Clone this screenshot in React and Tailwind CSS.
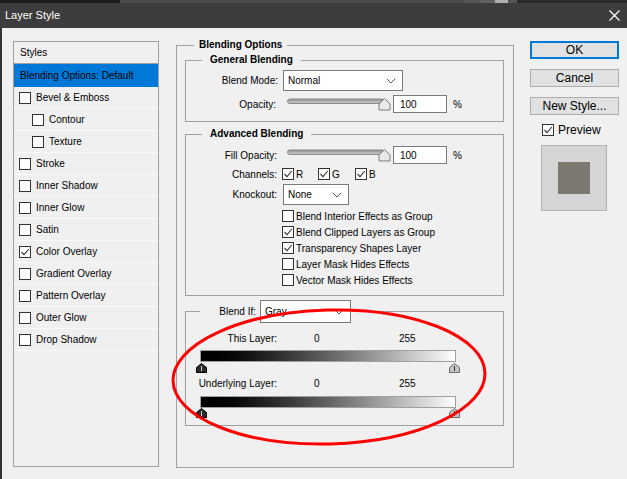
import React from "react";

const Check = ({ checked, className = "" }) => (
  <span
    className={
      "flex h-[12px] w-[12px] shrink-0 items-center justify-center border border-[#333333] bg-white " +
      className
    }
  >
    {checked && (
      <svg width="10" height="10" viewBox="0 0 10 10">
        <path d="M1.5 5 L4 7.6 L8.8 2" fill="none" stroke="#333" strokeWidth="1.1" />
      </svg>
    )}
  </span>
);

const Chevron = () => (
  <svg width="10" height="6" viewBox="0 0 10 6">
    <path d="M0.8 0.8 L5 5 L9.2 0.8" fill="none" stroke="#555" strokeWidth="1" />
  </svg>
);

const Select = ({ text, className = "" }) => (
  <div
    className={
      "flex items-center justify-between border border-[#7a7a7a] bg-white pl-[4px] pr-[6px] " + className
    }
  >
    <span>{text}</span>
    <Chevron />
  </div>
);

const Slider = () => (
  <svg width="108" height="18" viewBox="0 0 108 18" className="ml-[5px] shrink-0">
    <defs>
      <linearGradient id="trk" x1="0" y1="0" x2="0" y2="1">
        <stop offset="0" stopColor="#8e8e8e" />
        <stop offset="1" stopColor="#cfcfcf" />
      </linearGradient>
    </defs>
    <rect x="4.5" y="4" width="97" height="4.5" rx="2.2" fill="url(#trk)" stroke="#8a8a8a" strokeWidth="1" />
    <polygon points="101.5,3.5 107,9 107,15 96,15 96,9" fill="#e9e9e9" stroke="#7a7a7a" strokeWidth="1" />
  </svg>
);

const Input = ({ value }) => (
  <div className="ml-[2px] flex h-[18px] w-[54px] items-center border border-[#7a7a7a] bg-white pl-[6px]">
    {value}
  </div>
);

const Thumb = ({ dark }) => (
  <svg width="11" height="10" viewBox="0 0 11 10">
    <polygon
      points="5.5,0.5 10.5,4.5 10.5,9.5 0.5,9.5 0.5,4.5"
      fill={dark ? "#2b2b2b" : "#c4c4c4"}
      stroke={dark ? "#000" : "#6a6a6a"}
      strokeWidth="1"
    />
    <line x1="5.5" y1="3" x2="5.5" y2="8" stroke={dark ? "#d0d0d0" : "#333"} strokeWidth="1" />
  </svg>
);

const listItems = [
  { t: "Bevel & Emboss" },
  { t: "Contour", indent: true },
  { t: "Texture", indent: true },
  { t: "Stroke" },
  { t: "Inner Shadow" },
  { t: "Inner Glow" },
  { t: "Satin" },
  { t: "Color Overlay", checked: true },
  { t: "Gradient Overlay" },
  { t: "Pattern Overlay" },
  { t: "Outer Glow" },
  { t: "Drop Shadow" },
];

const advChecks = [
  { t: "Blend Interior Effects as Group" },
  { t: "Blend Clipped Layers as Group", checked: true },
  { t: "Transparency Shapes Layer", checked: true },
  { t: "Layer Mask Hides Effects" },
  { t: "Vector Mask Hides Effects" },
];

export default function App() {
  return (
    <div className="relative flex h-[479px] w-[627px] flex-col overflow-hidden bg-[#f0f0f0] font-['Liberation_Sans',Arial,sans-serif] text-[10px] text-black">
      {/* top strip */}
      <div className="flex h-[3px] shrink-0">
        <div className="w-[120px] bg-[#1c1c1c]" />
        <div className="w-[344px] bg-[#4b4b4b]" />
        <div className="w-[16px] bg-[#555555]" />
        <div className="w-[15px] bg-[#606060]" />
        <div className="w-[13px] bg-[#b0b0b0]" />
        <div className="w-[9px] bg-[#555555]" />
        <div className="flex-1 bg-[#2a2a2a]" />
      </div>
      {/* title bar */}
      <div className="flex h-[25px] shrink-0 items-center justify-between bg-[#3d3d3d] pl-[5px] pr-[7px] text-[11px] text-white">
        <span>Layer Style</span>
        <svg width="11" height="11" viewBox="0 0 11 11">
          <path d="M0.5 0.5 L10.5 10.5 M10.5 0.5 L0.5 10.5" stroke="#ffffff" strokeWidth="1.2" />
        </svg>
      </div>
      {/* body */}
      <div className="flex flex-1 border-l-2 border-[#333333]">
        {/* styles list */}
        <div className="ml-[11px] mt-[13px] flex h-[426px] w-[146px] flex-col border border-[#a0a0a0]">
          <div className="flex h-[22px] shrink-0 items-center border-b border-[#a0a0a0] pl-[6px]">Styles</div>
          <div className="flex h-[23px] shrink-0 items-center bg-[#0078d7] pl-[6px]">Blending Options: Default</div>
          {listItems.map((it) => (
            <div
              key={it.t}
              className={
                "flex h-[22px] shrink-0 items-center gap-[5px] border-b border-[#fafafa] " +
                (it.indent ? "pl-[18px]" : "pl-[5px]")
              }
            >
              <Check checked={it.checked} className="bg-[#f4f4f4]" />
              <span>{it.t}</span>
            </div>
          ))}
        </div>

        {/* main options */}
        <div className="ml-[17px] mt-[11px]">
          <fieldset className="h-[429px] w-[338px] border border-[#a0a0a0] pl-[8px] pr-[9px]">
            <legend className="ml-[9px] px-[5px] font-bold leading-[12px]">Blending Options</legend>

            {/* General Blending */}
            <fieldset className="mt-[3px] border border-[#a0a0a0] pb-[8px]">
              <legend className="ml-[16px] px-[8px] font-bold leading-[12px]">General Blending</legend>
              <div className="mt-[4px] flex h-[21px] items-center">
                <span className="w-[92px] text-right">Blend Mode:</span>
                <Select text="Normal" className="ml-[5px] h-[21px] w-[120px]" />
              </div>
              <div className="mt-[4px] flex h-[18px] items-center">
                <span className="w-[90px] text-right">Opacity:</span>
                <span className="w-[2px]" />
                <Slider />
                <Input value="100" />
                <span className="ml-[6px]">%</span>
              </div>
            </fieldset>

            {/* Advanced Blending */}
            <fieldset className="mt-[6px] border border-[#a0a0a0] pb-[7px]">
              <legend className="ml-[16px] px-[8px] font-bold leading-[12px]">Advanced Blending</legend>
              <div className="mt-[6px] flex h-[18px] items-center">
                <span className="w-[91px] text-right">Fill Opacity:</span>
                <span className="w-[1px]" />
                <Slider />
                <Input value="100" />
                <span className="ml-[6px]">%</span>
              </div>
              <div className="mt-[3px] flex h-[14px] items-center">
                <span className="w-[91px] text-right">Channels:</span>
                <div className="ml-[5px] flex w-[36px] items-center gap-[2px]">
                  <Check checked />
                  <span>R</span>
                </div>
                <div className="flex w-[37px] items-center gap-[2px]">
                  <Check checked />
                  <span>G</span>
                </div>
                <div className="flex items-center gap-[2px]">
                  <Check checked />
                  <span>B</span>
                </div>
              </div>
              <div className="mt-[3px] flex h-[21px] items-center">
                <span className="w-[91px] text-right">Knockout:</span>
                <Select text="None" className="ml-[6px] h-[21px] w-[66px]" />
              </div>
              <div className="mt-[3px] flex flex-col">
                {advChecks.map((c) => (
                  <div key={c.t} className="ml-[96px] flex h-[16px] items-center gap-[2px]">
                    <Check checked={c.checked} />
                    <span>{c.t}</span>
                  </div>
                ))}
              </div>
            </fieldset>

            {/* Blend If */}
            <fieldset className="mt-[4px] border border-[#a0a0a0] pb-[7px]">
              <legend className="ml-[14px] flex items-center">
                <span className="w-[56px] text-right">Blend If:</span>
                <Select text="Gray" className="ml-[4px] h-[23px] w-[91px]" />
              </legend>
              <div className="mt-[10px] flex h-[12px] items-center leading-[12px]">
                <span className="w-[91px] text-right">This Layer:</span>
                <span className="ml-[37px] w-[85px]">0</span>
                <span>255</span>
              </div>
              <div className="ml-[14px] mt-[5px] h-[12px] w-[256px] border border-[#a0a0a0] bg-linear-to-r from-black to-white" />
              <div className="ml-[10px] mt-[1px] flex h-[10px] w-[264px] justify-between">
                <Thumb dark />
                <Thumb />
              </div>
              <div className="mt-[5px] flex h-[12px] items-center leading-[12px]">
                <span className="w-[91px] text-right">Underlying Layer:</span>
                <span className="ml-[37px] w-[85px]">0</span>
                <span>255</span>
              </div>
              <div className="ml-[14px] mt-[6px] h-[12px] w-[256px] border border-[#a0a0a0] bg-linear-to-r from-black to-white" />
              <div className="ml-[10px] flex h-[10px] w-[264px] justify-between">
                <Thumb dark />
                <Thumb />
              </div>
            </fieldset>
          </fieldset>
        </div>

        {/* buttons */}
        <div className="ml-[16px] mt-[13px] flex w-[89px] flex-col text-[12px]">
          <div className="flex h-[18px] items-center justify-center border-2 border-[#0078d7] bg-[#e1e1e1]">OK</div>
          <div className="mt-[10px] flex h-[18px] items-center justify-center border border-[#adadad] bg-[#e1e1e1]">
            Cancel
          </div>
          <div className="mt-[10px] flex h-[18px] items-center justify-center border border-[#adadad] bg-[#e1e1e1]">
            New Style...
          </div>
          <div className="ml-[12px] mt-[8px] flex h-[14px] items-center gap-[4px]">
            <Check checked />
            <span>Preview</span>
          </div>
          <div className="ml-[11px] mt-[8px] flex h-[66px] w-[66px] items-center justify-center border border-[#b4b4b4] bg-[#d6d6d6]">
            <div className="h-[32px] w-[32px] bg-[#7b786f]" />
          </div>
        </div>
      </div>

      {/* red annotation ellipse */}
      <svg className="pointer-events-none absolute left-0 top-0" width="627" height="479" viewBox="0 0 627 479">
        <ellipse
          cx="329"
          cy="377"
          rx="156"
          ry="67"
          fill="none"
          stroke="#ff0000"
          strokeWidth="3"
          transform="rotate(-1.5 329 377)"
        />
      </svg>
    </div>
  );
}
